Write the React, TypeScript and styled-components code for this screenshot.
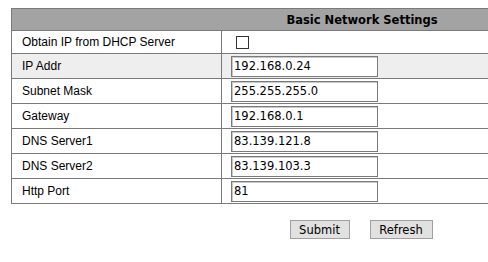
import styled, { createGlobalStyle } from 'styled-components'

const GlobalStyle = createGlobalStyle`
  html, body {
    margin: 0;
    padding: 0;
    background: #ffffff;
    overflow: hidden;
  }
`

const fields = [
  { label: `IP Addr`, value: `192.168.0.24`, shaded: true },
  { label: `Subnet Mask`, value: `255.255.255.0` },
  { label: `Gateway`, value: `192.168.0.1` },
  { label: `DNS Server1`, value: `83.139.121.8` },
  { label: `DNS Server2`, value: `83.139.103.3` },
  { label: `Http Port`, value: `81` },
]

const App = () => (
  <Page>
    <GlobalStyle />
    <Table>
      <Header>Basic Network Settings</Header>
      <Row $height={22}>
        <Label>Obtain IP from DHCP Server</Label>
        <Field>
          <Check type="checkbox" />
        </Field>
      </Row>
      {fields.map(({ label, value, shaded }) => (
        <Row key={label} $shaded={shaded}>
          <Label>{label}</Label>
          <Field>
            <TextInput defaultValue={value} />
          </Field>
        </Row>
      ))}
    </Table>
    <Actions>
      <Button $width={60}>Submit</Button>
      <Button $width={63}>Refresh</Button>
    </Actions>
  </Page>
)

export default App

const Page = styled.div`
  width: 702px;
  padding: 8px 0 0 11px;
`

const Table = styled.div`
  display: flex;
  flex-direction: column;
  border: 1px solid #7a7a7a;
`

const Header = styled.div`
  height: 21px;
  display: flex;
  align-items: center;
  justify-content: center;
  background: #a3a3a3;
  font-family: 'DejaVu Sans', Verdana, sans-serif;
  font-size: 11.5px;
  font-weight: bold;
  color: #000000;
`

interface IRowProps {
  $shaded?: boolean
  $height?: number
}

const Row = styled.div<IRowProps>`
  display: flex;
  height: ${({ $height }) => `${$height ?? 24}px`};
  border-top: 1px solid #7a7a7a;
  background: ${({ $shaded }) => ($shaded ? `#eeeeee` : `#ffffff`)};
`

const Label = styled.div`
  width: 199px;
  flex-shrink: 0;
  padding-left: 10px;
  display: flex;
  align-items: center;
  border-right: 1px solid #7a7a7a;
  font-family: 'Liberation Sans', Arial, sans-serif;
  font-size: 12px;
  color: #000000;
`

const Field = styled.div`
  flex: 1;
  display: flex;
  align-items: center;
  padding-left: 9px;
`

const Check = styled.input`
  appearance: none;
  margin: 0 0 0 5px;
  width: 13px;
  height: 13px;
  border: 1px solid #333333;
  background: #ffffff;
`

const TextInput = styled.input`
  box-sizing: border-box;
  width: 147px;
  height: 21px;
  margin: 0;
  padding: 0 2px;
  border: 1px solid #7a7a7a;
  box-shadow: inset 1px 1px 0 #c8c8c8;
  background: #ffffff;
  font-family: 'DejaVu Sans', Verdana, sans-serif;
  font-size: 11.5px;
  color: #000000;
  outline: none;
`

const Actions = styled.div`
  display: flex;
  justify-content: center;
  gap: 20px;
  margin-top: 16px;
  padding-right: 2px;
`

interface IButtonProps {
  $width: number
}

const Button = styled.button<IButtonProps>`
  box-sizing: border-box;
  width: ${({ $width }) => `${$width}px`};
  height: 19px;
  padding: 0;
  border: 1px solid #a0a0a0;
  background: #e1e1e1;
  font-family: 'DejaVu Sans', Verdana, sans-serif;
  font-size: 11.5px;
  color: #000000;
`
